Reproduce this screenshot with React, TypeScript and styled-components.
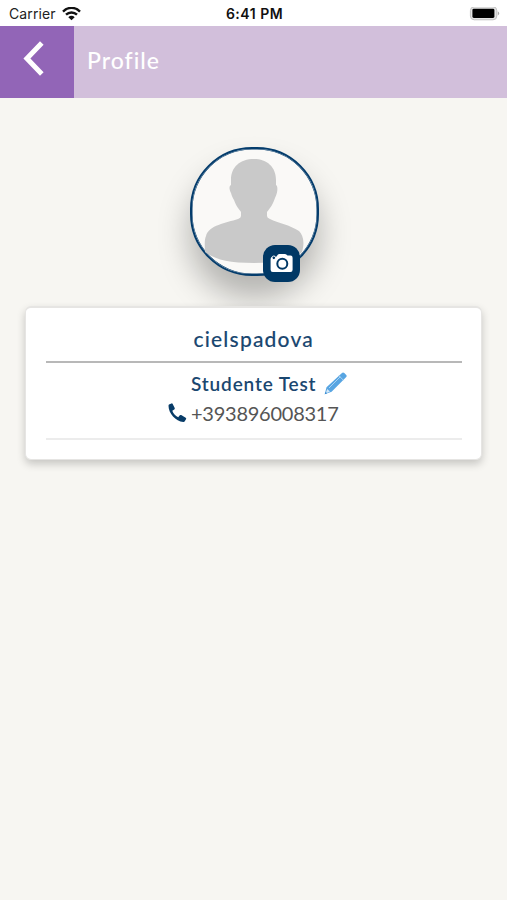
import React from "react";
import styled, { createGlobalStyle } from "styled-components";

const GlobalStyle = createGlobalStyle`
  * { box-sizing: border-box; }
  body { margin: 0; background: #f7f6f2; }
`;

const Screen = styled.div`
  display: flex;
  flex-direction: column;
  min-height: 900px;
  background: #f7f6f2;
  font-family: Lato, sans-serif;
  overflow: hidden;
`;

const StatusBar = styled.div`
  display: grid;
  grid-template-columns: 1fr auto 1fr;
  align-items: center;
  height: 25.5px;
  padding: 2px 7px 0 9px;
  background: #fff;
  color: #222;
  font: 14px/24px Inter, sans-serif;
`;

const Carrier = styled.div`
  display: flex;
  align-items: center;
  gap: 6px;
  letter-spacing: 0.1px;
`;

const Clock = styled.div`
  color: #111;
  font-size: 14px;
  font-weight: 600;
  letter-spacing: 0.5px;
`;

const Battery = styled.div`
  display: flex;
  justify-content: flex-end;
`;

const Header = styled.header`
  display: flex;
  height: 72.8px;
  background: #d2bfdb;
`;

const BackButton = styled.button`
  display: flex;
  width: 74px;
  padding: 15px 0 0 23px;
  border: 0;
  background: #9265b7;
`;

const Title = styled.h1`
  margin: 0;
  padding: 19px 0 0 13px;
  color: #fff;
  font-size: 23px;
  font-weight: 500;
  line-height: 30px;
  letter-spacing: 1px;
  font-variant-ligatures: none;
`;

const Profile = styled.main`
  display: flex;
  flex-direction: column;
  align-items: center;
  padding: 48.7px 25px 0;
`;

const Avatar = styled.div`
  position: relative;
  width: 129px;
  height: 129px;
  margin-left: 1px;
  border: 2px solid #043c6c;
  border-radius: 62px;
  background: #faf9f7;
  box-shadow: inset 0 0 0 0.5px #043c6c, 0 22px 32px rgba(0, 0, 0, 0.28);
`;

const CameraButton = styled.button`
  position: absolute;
  right: 17px;
  bottom: -8px;
  display: flex;
  align-items: center;
  justify-content: center;
  width: 37px;
  height: 37px;
  padding: 0;
  border: 0;
  border-radius: 12px;
  background: #003865;
`;

const Card = styled.section`
  position: relative;
  align-self: stretch;
  height: 154px;
  margin-top: 30px;
  padding: 0 19.5px 0 20px;
  border: 1px solid #e6e5e3;
  border-top: 2px solid #e6e5e3;
  border-radius: 6px;
  background: #fff;
  box-shadow: 0 4px 9px rgba(0, 0, 0, 0.2);
`;

const School = styled.h2`
  margin: 0;
  height: 55px;
  padding: 16px 0 0;
  border-bottom: 2px solid #b8b8b8;
  color: #1a4770;
  font-size: 21px;
  font-weight: 500;
  line-height: 30px;
  letter-spacing: 1.2px;
  text-align: center;
  -webkit-text-stroke: 0.1px #1a4770;
`;

const Details = styled.div`
  height: 77px;
  padding-top: 6px;
  border-bottom: 2px solid #ececec;
`;

const NameRow = styled.div`
  display: flex;
  align-items: center;
  height: 30px;
  padding-left: 145px;
  gap: 8px;
  color: #1a4770;
  font-size: 19px;
  font-weight: 600;
  letter-spacing: 0.85px;
`;

const PhoneRow = styled.div`
  display: flex;
  align-items: center;
  height: 29px;
  padding-left: 122px;
  gap: 3px;
  color: #555;
  font-size: 20px;
  letter-spacing: -0.25px;
`;

const Silhouette = () => (
  <svg width="124" height="123" viewBox="0 0 124 123">
    <path
      fill="#c9c9c9"
      d="M62 10C48 10 39 18 39 31L39 36C37 37 37 40 39 44C40 48 41 49 42 51C44 57 47 60 49 63L49 67Q49 69 46 70C34 74 17 76 14 87C12 91 13 99 13 103C22 110 36 114 62 114C88 114 103 110 110 103C113 93 111 86 107 82C98 76 86 74 78 70Q75 69 75 67L75 63C79 58 81 55 83 49C86 43 86 37 84 36L84 31C84 18 75 10 62 10Z"
    />
  </svg>
);

export default function App() {
  return (
    <Screen>
      <GlobalStyle />
      <StatusBar>
        <Carrier>
          Carrier
          <svg width="19" height="14" viewBox="0 0 19 14" fill="none" stroke="#111" strokeWidth="2.4">
            <path d="M1 4.6C6-.4 13-.4 18 4.6M4 7.7C7.1 4.7 11.9 4.7 15 7.7" />
            <path fill="#111" stroke="none" d="M6.3 10.2C8.1 8.4 10.9 8.4 12.7 10.2L9.5 13.3Z" />
          </svg>
        </Carrier>
        <Clock>6:41 PM</Clock>
        <Battery>
          <svg width="31" height="15" viewBox="0 0 31 15">
            <rect x="1.4" y="-.2" width="26.4" height="13" rx="3.8" fill="#e5e5e5" stroke="#c1c1c1" />
            <rect x="3.4" y="1.7" width="22" height="9.3" rx="1.4" fill="#000" />
            <path d="M28.8 4.3Q31.6 6.4 28.8 8.5Z" fill="#aaa" />
          </svg>
        </Battery>
      </StatusBar>
      <Header>
        <BackButton aria-label="Back">
          <svg width="22" height="36" viewBox="0 0 22 36" fill="none" stroke="#fff" strokeWidth="5">
            <path d="M18.8 2L3.9 17.5L18.8 33" />
          </svg>
        </BackButton>
        <Title>Profile</Title>
      </Header>
      <Profile>
        <Avatar>
          <Silhouette />
          <CameraButton aria-label="Change photo">
            <svg width="23" height="20" viewBox="0 0 23 20">
              <path
                fill="#fff"
                d="M2.5 4H6L8 1.5Q8.5 1 9.3 1H15Q15.8 1 16.3 1.6L17.5 2.5H20.5Q22.6 2.5 22.6 4.8V16.7Q22.6 19 20.5 19H2.8Q.6 19 .6 16.8V6Q.6 4 2.5 4Z"
              />
              <circle cx="12.3" cy="10.8" r="5" fill="#fff" stroke="#003865" strokeWidth="2" />
              <circle cx="3.8" cy="4.8" r="1.8" fill="#003865" stroke="#fff" />
            </svg>
          </CameraButton>
        </Avatar>
        <Card>
          <School>cielspadova</School>
          <Details>
            <NameRow>
              Studente Test
              <svg width="23" height="23" viewBox="0 0 23 23">
                <path fill="#58a5e2" d="M17.7 1.2Q19-.2 20.3 1L22 2.7Q23.3 3.8 22 5.3L7.6 19.7L.7 22.2L2.5 15.2Z" />
                <path stroke="#a9d3f4" fill="none" d="M5 16L16.3 4.7M15 3.8L19.4 8.2" />
                <path fill="#d4e8f8" d="M3.2 17L6 19.6L2.7 21.1L2 20.4Z" />
                <path fill="#398bcf" d="M1.6 19.9L3.1 21.3L.7 22.2Z" />
              </svg>
            </NameRow>
            <PhoneRow>
              <svg width="20" height="21" viewBox="0 0 20 21">
                <path
                  fill="#083c68"
                  d="M2 .2L4-.6Q4.8-.9 5.2 0L7.2 4Q7.6 4.8 6.8 5.4L4.8 6.7Q6.3 10.8 10.7 13.2L12.3 11.3Q12.9 10.6 13.7 11.1L18.2 13.7Q19.1 14.3 18.6 15.1L17.3 17.2Q16.8 18 15.8 17.9C8.2 17.3 1 9.3 1 1.7Q1 .6 2 .2Z"
                  transform="translate(-.5 1)"
                />
              </svg>
              +393896008317
            </PhoneRow>
          </Details>
        </Card>
      </Profile>
    </Screen>
  );
}
